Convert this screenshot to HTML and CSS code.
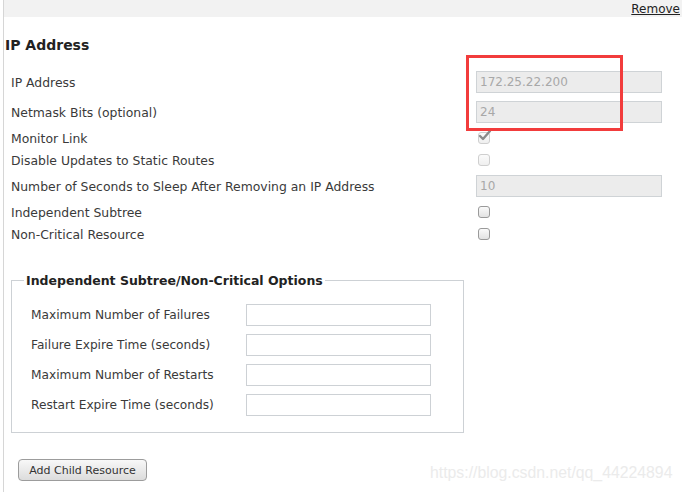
FILE: index.html
```html
<!DOCTYPE html>
<html lang="en">
<head>
  <meta charset="UTF-8" />
  <title>IP Address Resource</title>
  <link rel="stylesheet" href="styles.css">
</head>
<body>

<div class="panel">
  <!-- top bar -->
  <div class="toolbar"><a href="#" class="remove">Remove</a></div>

  <div class="content">
    <h3 class="section-title">IP Address</h3>

    <div class="form">
      <div class="row tall">
        <label>IP Address</label>
        <input type="text" class="field" value="172.25.22.200" disabled>
      </div>
      <div class="row tall">
        <label>Netmask Bits (optional)</label>
        <input type="text" class="field" value="24" disabled>
      </div>
      <div class="row">
        <label>Monitor Link</label>
        <span class="check disabled checked">
          <svg width="14" height="12" viewBox="0 0 14 12"><path d="M2 7 L5 10 L12 2" fill="none" stroke="#8a8a8a" stroke-width="2.4" stroke-linecap="round" stroke-linejoin="round"/></svg>
        </span>
      </div>
      <div class="row">
        <label>Disable Updates to Static Routes</label>
        <span class="check disabled"></span>
      </div>
      <div class="row tall">
        <label>Number of Seconds to Sleep After Removing an IP Address</label>
        <input type="text" class="field" value="10" disabled>
      </div>
      <div class="row">
        <label>Independent Subtree</label>
        <span class="check"></span>
      </div>
      <div class="row">
        <label>Non-Critical Resource</label>
        <span class="check"></span>
      </div>
    </div>

    <fieldset class="options">
      <legend>Independent Subtree/Non-Critical Options</legend>
      <div class="opt-row">
        <label>Maximum Number of Failures</label>
        <input type="text" class="opt-field">
      </div>
      <div class="opt-row">
        <label>Failure Expire Time (seconds)</label>
        <input type="text" class="opt-field">
      </div>
      <div class="opt-row">
        <label>Maximum Number of Restarts</label>
        <input type="text" class="opt-field">
      </div>
      <div class="opt-row">
        <label>Restart Expire Time (seconds)</label>
        <input type="text" class="opt-field">
      </div>
    </fieldset>

    <button class="btn" type="button">Add Child Resource</button>
  </div>
</div>

<!-- red annotation box drawn over the screenshot -->
<div class="annotation"></div>

<div class="watermark">https://blog.csdn.net/qq_44224894</div>

</body>
</html>
```

FILE: styles.css
```css
body {
  margin: 0;
  font-family: 'DejaVu Sans', sans-serif;
  font-size: 12px;
  color: #3a3a3a;
  background: white;
  overflow: hidden;
}

.panel {
  margin-left: 3px;
  border-left: 1px solid #d6d6d6;
  min-height: 100vh;
}

.toolbar {
  height: 17px;
  background: #f2f2f2;
  display: flex;
  justify-content: flex-end;
  align-items: center;
  padding-right: 2px;
}

.remove {
  color: #222;
  text-decoration: underline;
  font-size: 12px;
}

.content {
  padding-left: 1px;
}

.section-title {
  font-size: 14px;
  font-weight: bold;
  color: #222;
  margin: 20px 0 13px 0;
  line-height: 17px;
}

.form {
  padding-left: 6px;
  font-size: 12.4px;
}

.row {
  display: grid;
  grid-template-columns: 465px 186px;
  align-items: center;
  height: 22px;
}

.row.tall {
  height: 30px;
}

.field {
  box-sizing: border-box;
  width: 186px;
  height: 22px;
  margin: 0;
  padding: 0 3px;
  font-family: 'DejaVu Sans', sans-serif;
  font-size: 12px;
  color: #a8a8a8;
  background: #ececec;
  border: 1px solid #cfd3d6;
}

.check {
  box-sizing: border-box;
  width: 12px;
  height: 12px;
  margin-left: 2px;
  border: 1px solid #9a9a9a;
  border-radius: 3px;
  background: linear-gradient(#fafafa, #e2e2e2);
  position: relative;
}

.check.disabled {
  border-color: #cfcfcf;
  background: linear-gradient(#fbfbfb, #efefef);
}

.check svg {
  position: absolute;
  left: -1px;
  top: -4px;
}

.options {
  margin: 28px 0 0 6px;
  width: 453px;
  box-sizing: border-box;
  border: 1px solid #cdd1d5;
  padding: 12px 13px 12px 12px;
}

.options legend {
  font-weight: bold;
  color: #222;
  font-size: 12.5px;
  padding: 0 2px;
  line-height: 15px;
}

.opt-row {
  display: grid;
  grid-template-columns: 215px 185px;
  align-items: center;
  height: 30px;
  padding-left: 7px;
  font-size: 12.2px;
}

.opt-field {
  box-sizing: border-box;
  width: 185px;
  height: 22px;
  margin: 0;
  background: white;
  border: 1px solid #cdd1d5;
}

.btn {
  margin: 26px 0 0 13px;
  width: 129px;
  height: 22px;
  padding: 0;
  font-family: 'DejaVu Sans', sans-serif;
  font-size: 11px;
  color: #333;
  background: linear-gradient(#f8f8f8, #dcdcdc);
  border: 1px solid #9c9c9c;
  border-radius: 4px;
}

.annotation {
  position: absolute;
  left: 466px;
  top: 55px;
  width: 151px;
  height: 70px;
  border: 3px solid #f23c3c;
}

.watermark {
  position: absolute;
  left: 430px;
  top: 464px;
  font-family: 'Liberation Sans', Arial, sans-serif;
  font-size: 15.8px;
  color: #ebebeb;
}
```
